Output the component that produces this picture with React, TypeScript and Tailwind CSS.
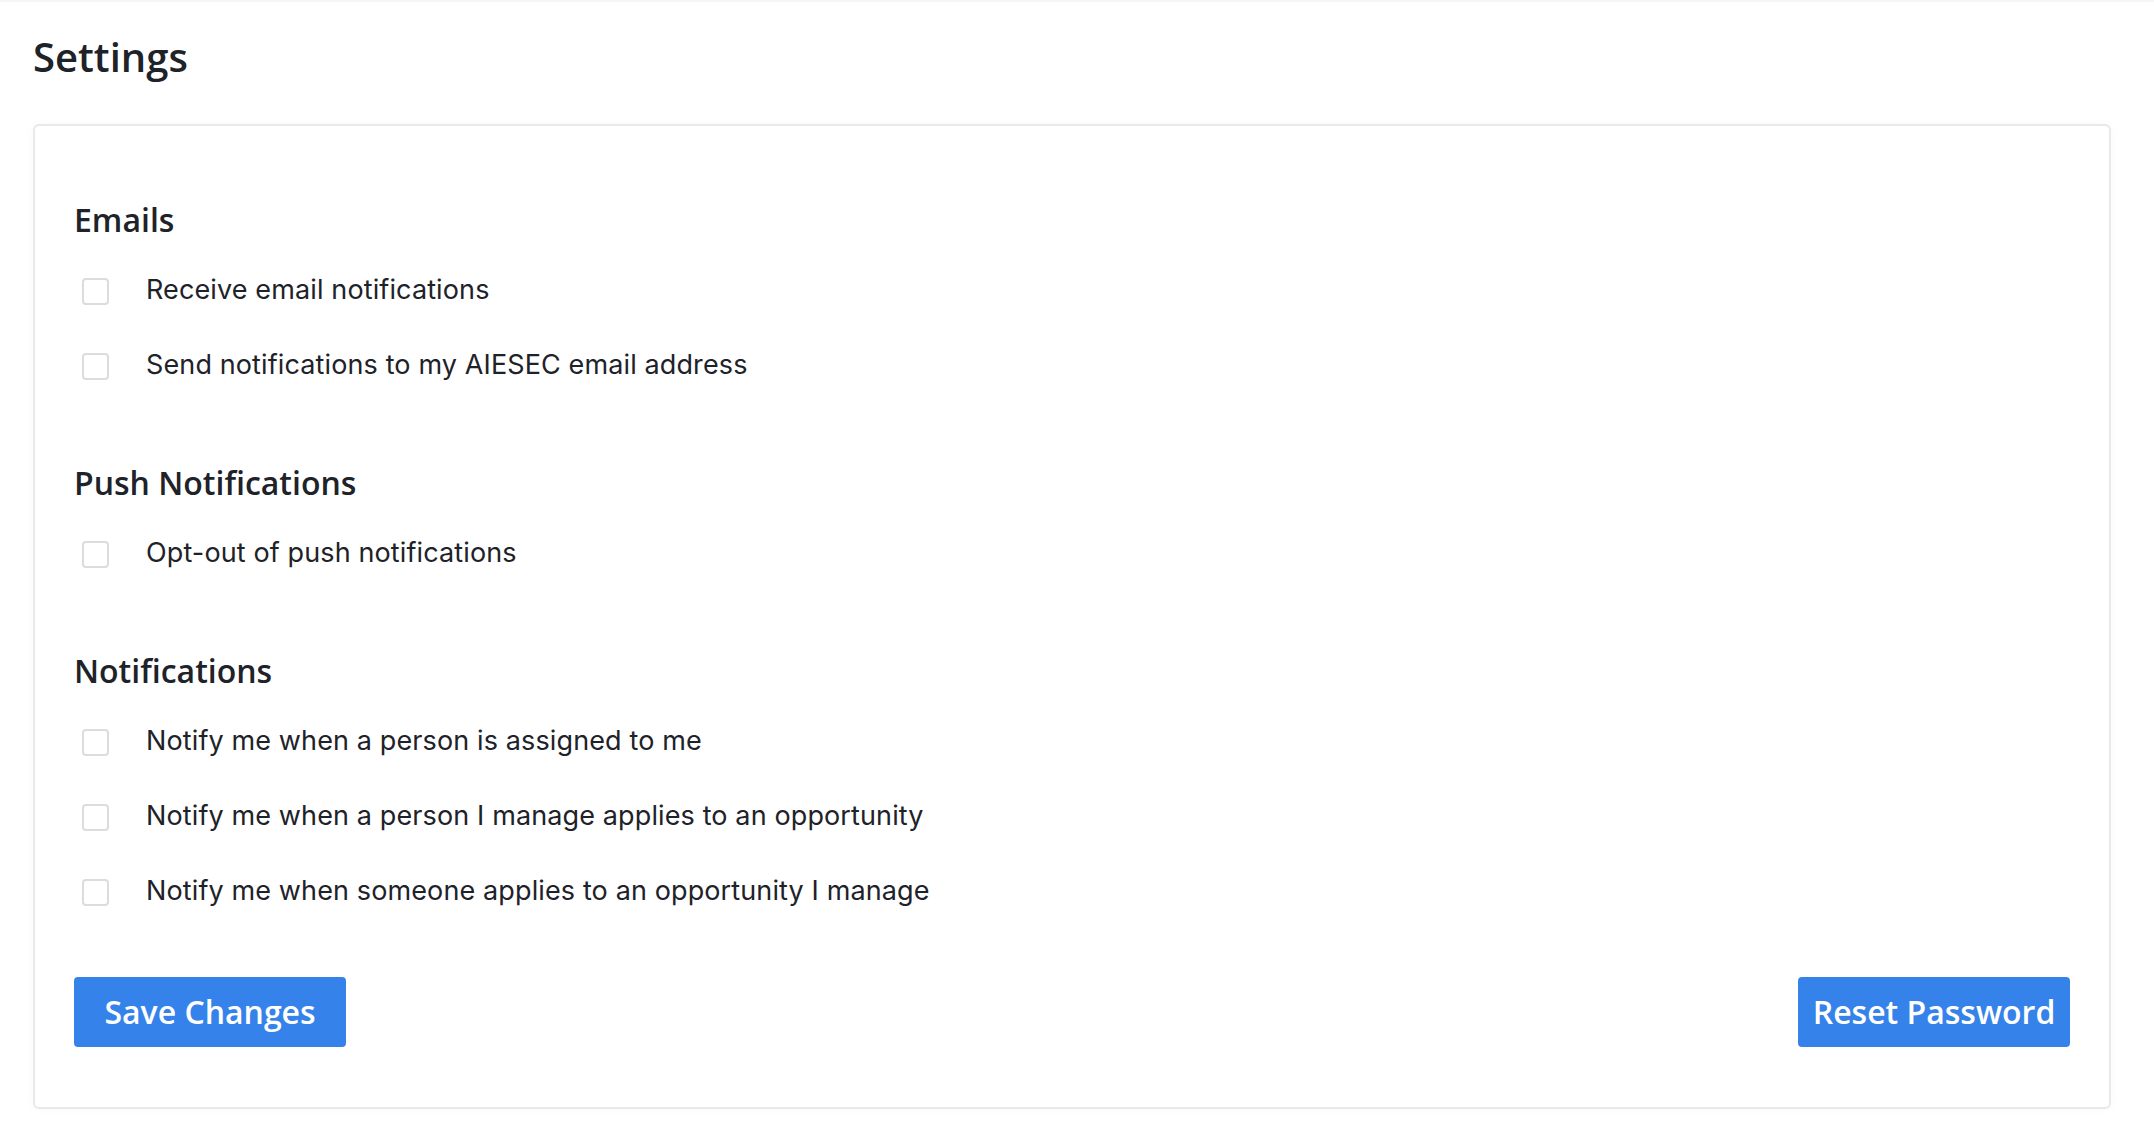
import React from "react";

const heading = "font-['Open_Sans',sans-serif] font-semibold text-[#1e2229]";
const body = "font-['Inter',sans-serif] text-[#1e2229]";

function Row({ label }: { label: string }) {
  return (
    <label className="flex items-start h-[27px] pl-[8px]">
      <span className="block w-[27px] h-[27px] shrink-0 rounded-[4px] border-2 border-[#dcdcdc] bg-white" />
      <span className={`${body} ml-[37px] text-[27px] leading-[27px] tracking-[0.12px] -mt-[2px] whitespace-nowrap`}>{label}</span>
    </label>
  );
}

function Section({ title, items, first }: { title: string; items: string[]; first?: boolean }) {
  return (
    <div className={first ? "" : "mt-[83px]"}>
      <h2 className={`${heading} text-[32px] leading-[40px] h-[40px]`}>{title}</h2>
      <div className="mt-[38px] flex flex-col gap-[48px]">
        {items.map((t) => (
          <Row key={t} label={t} />
        ))}
      </div>
    </div>
  );
}

export default function App() {
  return (
    <div className="min-h-[1132px] bg-white border-t-2 border-[#f6f6f6] pl-[33px] pr-[43px] pt-[30px]">
      <h1 className={`${heading} text-[40px] leading-[50px] h-[50px]`}>Settings</h1>
      <div className="mt-[42px] rounded-[6px] border-2 border-[#e9e9e9] bg-white shadow-[0_0_10px_rgba(0,0,0,0.03)] pl-[39px] pr-[39px] pt-[74px] pb-[60px]">
        <Section first title="Emails" items={["Receive email notifications", "Send notifications to my AIESEC email address"]} />
        <Section title="Push Notifications" items={["Opt-out of push notifications"]} />
        <Section
          title="Notifications"
          items={[
            "Notify me when a person is assigned to me",
            "Notify me when a person I manage applies to an opportunity",
            "Notify me when someone applies to an opportunity I manage",
          ]}
        />
        <div className="mt-[71px] flex justify-between">
          <button className="w-[272px] h-[70px] rounded-[4px] bg-[#3583ea] text-white font-['Open_Sans',sans-serif] font-semibold text-[32px] leading-none">
            Save Changes
          </button>
          <button className="w-[272px] h-[70px] rounded-[4px] bg-[#3583ea] text-white font-['Open_Sans',sans-serif] font-semibold text-[32px] leading-none">
            Reset Password
          </button>
        </div>
      </div>
    </div>
  );
}
